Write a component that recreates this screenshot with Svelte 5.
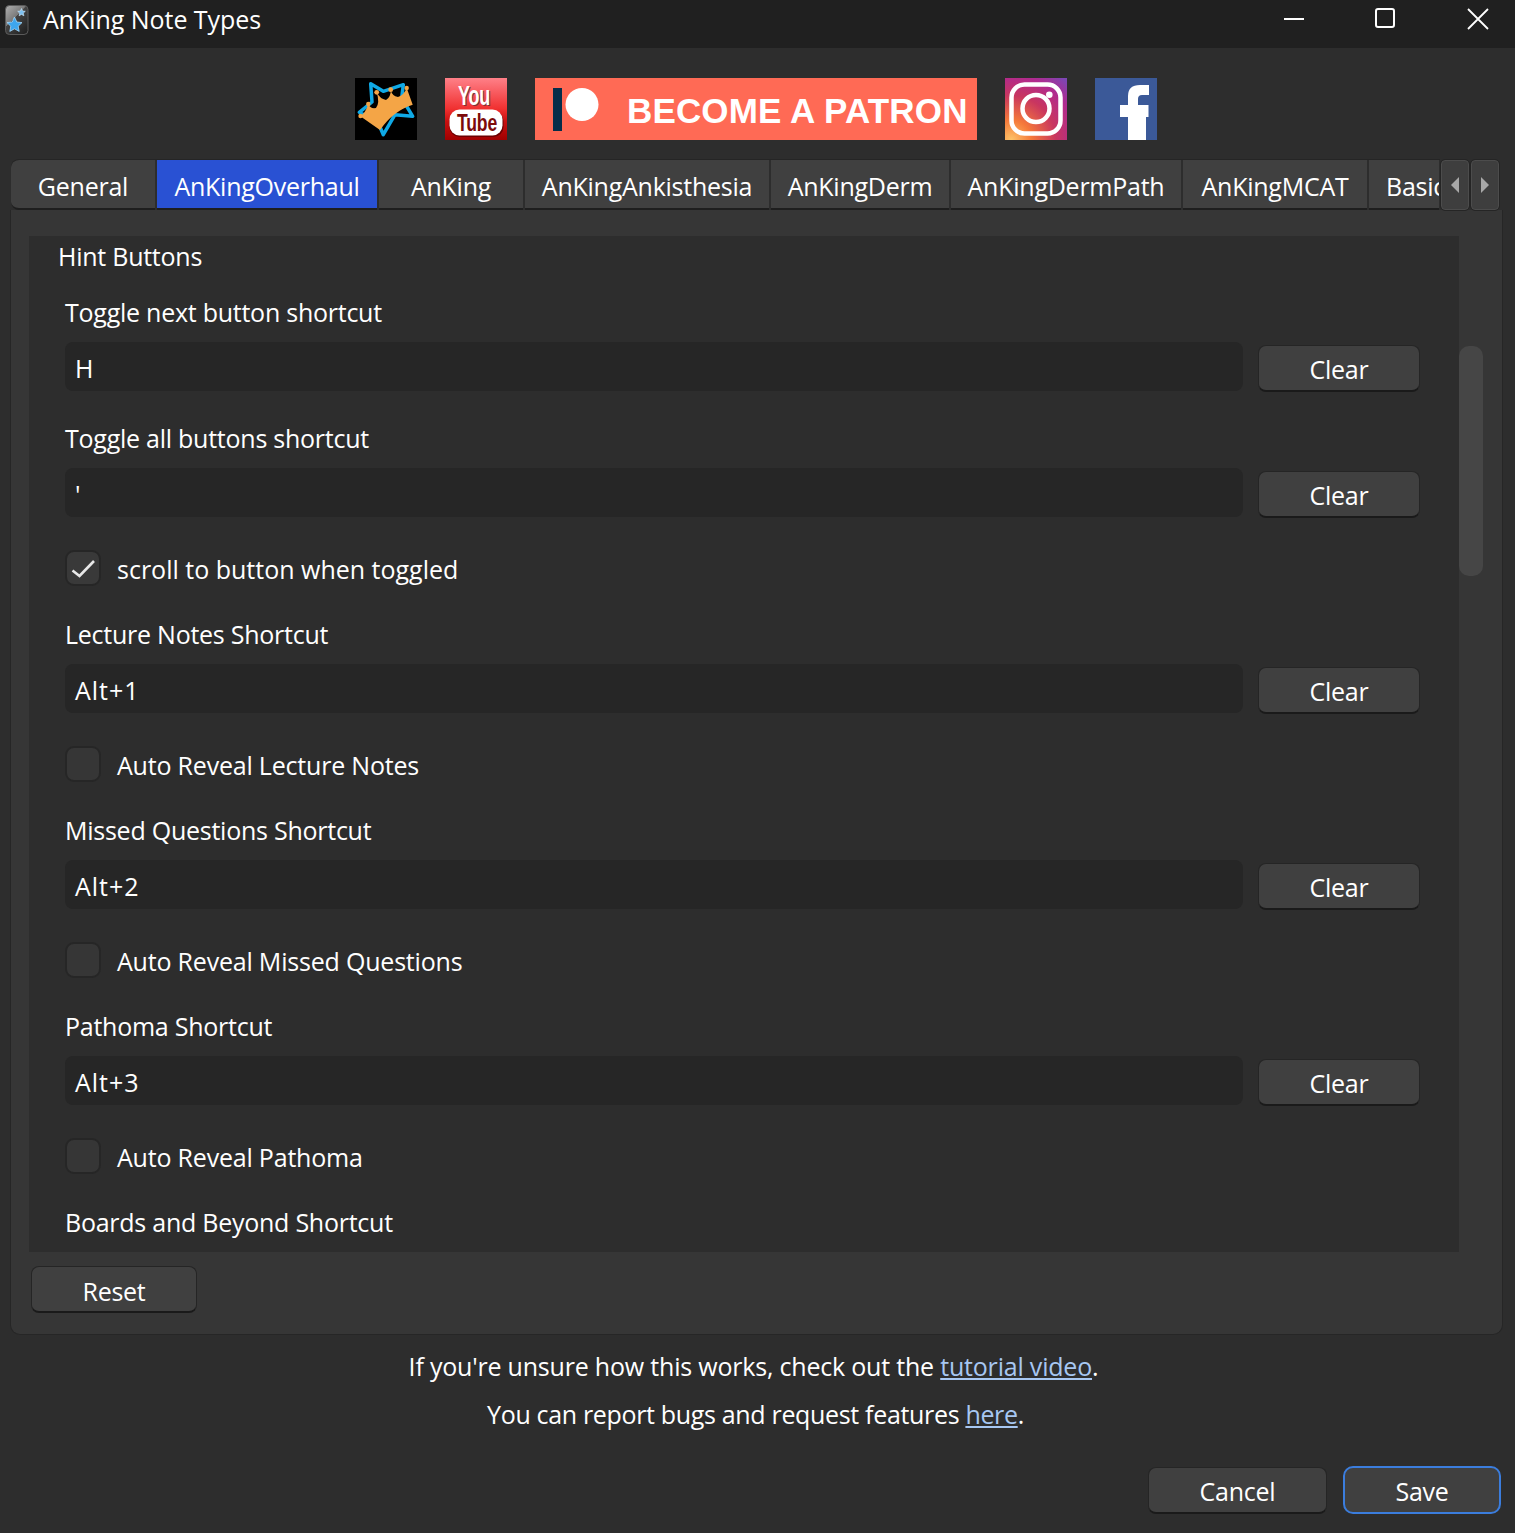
<script>
  const tabs = [
    { name: 'General', w: 144 },
    { name: 'AnKingOverhaul', w: 220, active: true },
    { name: 'AnKing', w: 144 },
    { name: 'AnKingAnkisthesia', w: 244 },
    { name: 'AnKingDerm', w: 178 },
    { name: 'AnKingDermPath', w: 230 },
    { name: 'AnKingMCAT', w: 184 },
    { name: 'Basic', w: 70, cut: true }
  ];
  const groups = [
    { label: 'Lecture Notes Shortcut', value: 'Alt+1', check: 'Auto Reveal Lecture Notes' },
    { label: 'Missed Questions Shortcut', value: 'Alt+2', check: 'Auto Reveal Missed Questions' },
    { label: 'Pathoma Shortcut', value: 'Alt+3', check: 'Auto Reveal Pathoma' }
  ];
</script>

<div class="window">
  <header class="titlebar">
    <div class="title-left">
      <svg class="app-icon" viewBox="0 0 24 30">
        <defs>
          <linearGradient id="ai" x1="0" y1="0" x2="0.8" y2="1">
            <stop offset="0" stop-color="#b0b0b0"/><stop offset="0.45" stop-color="#7a7a7a"/><stop offset="0.46" stop-color="#444"/><stop offset="1" stop-color="#222"/>
          </linearGradient>
        </defs>
        <rect x="0.500" y="0.500" width="22.500" height="29" rx="4" fill="url(#ai)" stroke="#5a5a5a"/>
        <polygon points="9.500,12 11.800,17 17,17.600 13.200,21.200 14.200,26.400 9.500,23.800 4.800,26.400 5.800,21.200 2,17.600 7.200,17" fill="#3ea6ee" stroke="#a8d8f8" stroke-width="0.800"/>
        <polygon points="16.500,3.500 17.600,6 20.300,6.300 18.300,8.100 18.900,10.800 16.500,9.400 14.100,10.800 14.700,8.100 12.700,6.300 15.400,6" fill="#7cc0f0" stroke="#cfe8fa" stroke-width="0.600"/>
      </svg>
      <span class="title">AnKing Note Types</span>
    </div>
    <div class="win-controls">
      <svg width="22" height="4" viewBox="0 0 22 4"><rect x="1" y="1" width="20" height="2" fill="#fff"/></svg>
      <svg width="22" height="22" viewBox="0 0 22 22"><rect x="1" y="1" width="18" height="18" rx="2" fill="none" stroke="#fff" stroke-width="2"/></svg>
      <svg width="22" height="22" viewBox="0 0 22 22"><path d="M1 1 L21 21 M21 1 L1 21" stroke="#fff" stroke-width="1.800" fill="none"/></svg>
    </div>
  </header>

  <div class="logos">
    <svg class="logo" viewBox="0 0 62 62" role="img" aria-label="AnKing">
      <rect width="62" height="62" fill="#000"/>
      <path d="M15.700 5.700 L28.300 13.300 L48.300 6.700 L46.700 20 L57.700 38.300 L40 36.700 L28.300 56.700 L23.300 45 L4.300 34.300 L17 24 Z" fill="none" stroke="#0fa9e6" stroke-width="3.500" stroke-linejoin="round"/>
      <path d="M5 38 Q10 36 13.300 26 Q15 31 21 30 Q25 25 21.700 14.300 Q25 21 31 22 Q36 19 35.700 11.700 Q37 18 43 19 Q49 17 51.700 10 L57.700 26.700 Q38 33 25 52 Z" fill="#f4a546"/>
      <circle cx="5.500" cy="38" r="2.200" fill="#f4a546"/><circle cx="13.300" cy="26" r="2.200" fill="#f4a546"/><circle cx="21.700" cy="14.300" r="2.400" fill="#f4a546"/><circle cx="35.700" cy="11.700" r="2.400" fill="#f4a546"/><circle cx="51.700" cy="10" r="2.200" fill="#f4a546"/>
    </svg>

    <svg class="logo" viewBox="0 0 62 62" role="img" aria-label="YouTube">
      <defs>
        <linearGradient id="yt" x1="0" y1="0" x2="0" y2="1">
          <stop offset="0" stop-color="#ff8088"/><stop offset="0.5" stop-color="#f03030"/><stop offset="0.7" stop-color="#c81010"/><stop offset="1" stop-color="#a00000"/>
        </linearGradient>
      </defs>
      <rect width="62" height="62" fill="url(#yt)"/>
      <rect x="4.500" y="33" width="54" height="26" rx="10" fill="#6d0000"/>
      <rect x="4.500" y="31.500" width="53" height="26" rx="10" fill="#fff"/>
      <text x="14" y="28" class="yt you shadow" textLength="32" lengthAdjust="spacingAndGlyphs">You</text>
      <text x="13" y="27" class="yt you" textLength="32" lengthAdjust="spacingAndGlyphs">You</text>
      <text x="12" y="53" class="yt tube" textLength="40" lengthAdjust="spacingAndGlyphs">Tube</text>
    </svg>

    <div class="patron">
      <svg width="46" height="44" viewBox="0 0 46 44">
        <rect x="0" y="1" width="9" height="43" fill="#052d49"/>
        <circle cx="29" cy="17.500" r="16.500" fill="#fff"/>
      </svg>
      <span>BECOME A PATRON</span>
    </div>

    <svg class="logo" viewBox="0 0 62 62" role="img" aria-label="Instagram">
      <defs>
        <radialGradient id="ig" cx="0.1" cy="1" r="1.300">
          <stop offset="0" stop-color="#fdc468"/><stop offset="0.25" stop-color="#f5793a"/><stop offset="0.55" stop-color="#c9365f"/><stop offset="0.8" stop-color="#b02a8f"/><stop offset="1" stop-color="#7d46b4"/>
        </radialGradient>
      </defs>
      <rect width="62" height="62" fill="url(#ig)"/>
      <rect x="6.500" y="6.500" width="49" height="49" rx="13" fill="none" stroke="#fff" stroke-width="4.500"/>
      <circle cx="31" cy="30.500" r="13.500" fill="none" stroke="#fff" stroke-width="4.500"/>
      <circle cx="44.300" cy="16.700" r="3.300" fill="#fff"/>
    </svg>

    <svg class="logo" viewBox="0 0 62 62" role="img" aria-label="Facebook">
      <rect width="62" height="62" fill="#3b5998"/>
      <path d="M33 62 V39 H25 V27 H33 V18 Q33 7 45 7 H54 V17 H47 Q43 17 43 21 V27 H53.500 V39 H51 V62 Z" fill="#fff"/>
    </svg>
  </div>

  <section class="tabwidget">
    <div class="tabbar">
      <div class="tabs">
        {#each tabs as t, i}
          <div class="tab" class:active={t.active} class:first={i === 0} class:cut={t.cut} style="width:{t.w}px">{t.name}</div>
        {/each}
      </div>
      <div class="arrow"><svg width="10" height="16" viewBox="0 0 10 16"><polygon points="9,0 9,16 1,8" fill="#a8a8a8"/></svg></div>
      <div class="arrow"><svg width="10" height="16" viewBox="0 0 10 16"><polygon points="1,0 1,16 9,8" fill="#a8a8a8"/></svg></div>
    </div>

    <div class="panel">
      <div class="scroll-wrap">
        <div class="scroll">
          <div class="group-title">Hint Buttons</div>

          <div class="lbl first-lbl">Toggle next button shortcut</div>
          <div class="row">
            <div class="input">H</div>
            <button class="btn clear">Clear</button>
          </div>

          <div class="lbl after-input">Toggle all buttons shortcut</div>
          <div class="row">
            <div class="input">'</div>
            <button class="btn clear">Clear</button>
          </div>

          <label class="check wide">
            <span class="box checked">
              <svg width="24" height="20" viewBox="0 0 24 20"><path d="M1.500 12.500 L8.500 18 L23 3" fill="none" stroke="#e8e8e8" stroke-width="2.600"/></svg>
            </span>
            scroll to button when toggled
          </label>

          {#each groups as g}
            <div class="lbl">{g.label}</div>
            <div class="row">
              <div class="input">{g.value}</div>
              <button class="btn clear">Clear</button>
            </div>
            <label class="check"><span class="box"></span>{g.check}</label>
          {/each}

          <div class="lbl">Boards and Beyond Shortcut</div>
        </div>
        <div class="sbar"><div class="thumb"></div></div>
      </div>
      <button class="btn reset">Reset</button>
    </div>
  </section>

  <p class="note n1">If you're unsure how this works, check out the <a href="#tutorial">tutorial video</a>.</p>
  <p class="note n2">You can report bugs and request features <a href="#here">here</a>.</p>

  <footer class="footer">
    <button class="btn cancel">Cancel</button>
    <button class="btn save">Save</button>
  </footer>
</div>

<style>
  :global(body) { margin: 0; background: #2d2d2d; }
  .window {
    width: 1515px; height: 1533px; overflow: hidden; background: #2d2d2d; color: #fff;
    font-family: "Open Sans", "Noto Sans", sans-serif; font-size: 25px; letter-spacing: -0.25px;
    display: flex; flex-direction: column;
  }
  .titlebar { height: 48px; flex: none; background: #202020; display: flex; justify-content: space-between; align-items: center; }
  .title-left { display: flex; align-items: center; padding-left: 5px; }
  .app-icon { width: 24px; height: 30px; margin-top: -9px; }
  .title { margin-left: 14px; font-size: 25px; line-height: 34px; letter-spacing: -0.05px; margin-top: -11px; }
  .win-controls { display: flex; align-items: center; gap: 70px; padding-right: 26px; margin-top: -10px; }

  .logos { display: flex; justify-content: center; gap: 28px; padding: 30px 3px 0 0; height: 62px; flex: none; }
  .logo { width: 62px; height: 62px; display: block; flex: none; }
  .yt { font-family: "Liberation Sans", sans-serif; font-weight: 700; }
  .you { font-size: 28px; fill: #fff; }
  .you.shadow { fill: #7a3036; }
  .tube { font-size: 23.500px; fill: #7d0a0a; }
  .patron { width: 442px; height: 62px; background: #ff6a55; display: flex; align-items: center; padding-left: 18px; box-sizing: border-box; flex: none; }
  .patron span { font-family: "Liberation Sans", sans-serif; font-weight: 700; font-size: 35px; letter-spacing: 0.15px; margin-left: 28px; white-space: nowrap; line-height: 62px; padding-top: 3px; }

  .tabwidget { margin: 20px 12px 0 10px; flex: none; position: relative; }
  .tabbar { display: flex; align-items: flex-start; height: 50px; padding-left: 1px; position: relative; z-index: 1; }
  .tabs { display: flex; gap: 2px; width: 1429px; overflow: hidden; flex: none; border-top: 1px solid #252525; margin-top: -1px; border-top-left-radius: 8px; }
  .tab {
    height: 50px; flex: none; background: #404040; border-bottom: 2px solid #1e1e1e; box-sizing: border-box;
    display: flex; align-items: center; justify-content: center; white-space: nowrap; padding-top: 4px; line-height: 44px;
  }
  .tab.first { border-top-left-radius: 8px; border-bottom-left-radius: 8px; }
  .tab.active { background: #2951d3; }
  .tab.cut { justify-content: flex-start; padding-left: 17px; overflow: hidden; }
  .arrow {
    width: 26px; height: 48px; margin-left: 1px; margin-right: 1px; flex: none; background: #3e3e3e; border: 1px solid #4c4c4c; outline: 1px solid #252525;
    border-radius: 4px; display: flex; align-items: center; justify-content: center;
  }
  .panel {
    height: 1125px; box-sizing: border-box; background: #363636; border: 1px solid #262626; border-top: none;
    border-radius: 0 0 10px 10px; padding: 26px 19px 0 18px;
  }
  .scroll-wrap { display: flex; height: 1016px; }
  .scroll { width: 1430px; flex: none; background: #2d2d2d; overflow: hidden; padding-left: 36px; box-sizing: border-box; }
  .sbar { width: 24px; position: relative; flex: none; }
  .thumb { position: absolute; top: 110px; left: 0; width: 24px; height: 230px; background: #464646; border-radius: 10px; }

  .group-title { line-height: 32px; margin-top: 4px; margin-left: -7px; }
  .lbl { line-height: 32px; margin-top: 32px; margin-bottom: 14px; }
  .first-lbl { margin-top: 24px; }
  .after-input { margin-top: 31px; }
  .row { display: flex; align-items: flex-start; height: 49px; }
  .input { width: 1178px; height: 49px; background: #262626; border-radius: 8px; box-sizing: border-box; padding-left: 10px; line-height: 52px; flex: none; letter-spacing: 1px; }
  .btn {
    font: inherit; letter-spacing: inherit; color: #fff; background: #404040; border: 1px solid #252525; border-bottom: 2px solid #1a1a1a;
    border-radius: 8px; box-sizing: border-box; padding: 3px 0 0; line-height: 1; display: block;
  }
  .clear { width: 162px; height: 47px; margin: 3px 0 0 15px; }
  .check { display: flex; align-items: center; height: 34px; margin-top: 35px; line-height: 36px; letter-spacing: -0.2px; }
  .check.wide { letter-spacing: 0; }
  .box {
    width: 36px; height: 36px; flex: none; background: #363636; border: 2px solid #262626; border-radius: 9px; margin-right: 16px;
    display: flex; align-items: center; justify-content: center; box-sizing: border-box; margin-top: -2px;
  }
  .box.checked { background: #393939; }
  .reset { width: 166px; height: 47px; margin: 14px 0 0 2px; padding-top: 5px; }

  .note { margin: 0; text-align: center; line-height: 34px; color: #fff; }
  .note a { color: #a7c7f2; }
  .n1 { margin-top: 14px; margin-right: 8px; letter-spacing: -0.2px; }
  .n2 { margin-top: 14px; margin-right: 4px; letter-spacing: -0.33px; }

  .footer { display: flex; justify-content: flex-end; align-items: flex-end; gap: 16px; padding-right: 14px; margin-top: 35px; }
  .cancel { width: 179px; height: 47px; }
  .save { width: 158px; height: 48px; border: 2px solid #3b7ddd; border-radius: 10px; }
</style>
